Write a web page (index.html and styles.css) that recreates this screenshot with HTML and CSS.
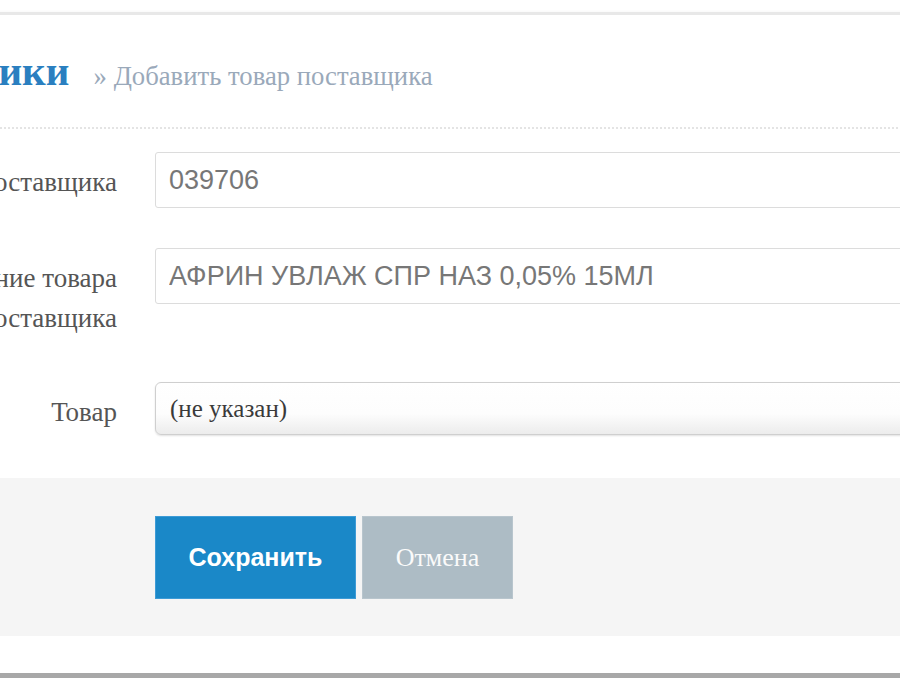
FILE: index.html
```html
<!DOCTYPE html>
<html lang="ru">

<head>
  <meta charset="UTF-8">
  <meta name="viewport" content="width=device-width, initial-scale=1.0">
  <title>Добавить товар поставщика</title>
  <link rel="stylesheet" href="styles.css">
</head>

<body>
  <div class="page">
    <div class="card">
      <div class="page-header">
        <h1>Поставщики <small>» Добавить товар поставщика</small></h1>
      </div>

      <form class="form">
        <div class="form-row">
          <label class="form-label" for="code">Код поставщика</label>
          <input class="form-input" id="code" type="text" value="039706">
        </div>

        <div class="form-row">
          <label class="form-label" for="name">Наименование товара поставщика</label>
          <input class="form-input" id="name" type="text" value="АФРИН УВЛАЖ СПР НАЗ 0,05% 15МЛ">
        </div>

        <div class="form-row form-row-select">
          <label class="form-label" for="product">Товар</label>
          <select class="form-select" id="product">
            <option>(не указан)</option>
          </select>
        </div>

        <div class="form-actions">
          <button type="button" class="save-button">Сохранить</button>
          <button type="button" class="cancel-button">Отмена</button>
        </div>
      </form>
    </div>
  </div>
</body>

</html>
```

FILE: styles.css
```css
html,
body {
  overflow: hidden;
}

body {
  margin: 0;
  padding: 12px 0 0;
  background-color: #fff;
  font-family: "Liberation Serif", serif;
  color: #555;
}

.page {
  margin-left: -183px;
  width: 1400px;
}

.card {
  background-color: #fff;
  border-top: 3px solid #e8e8e8;
  border-bottom: 5px solid #a8a8a8;
  box-shadow: 0 3px 5px rgba(0, 0, 0, 0.2);
  padding-bottom: 37px;
}

.page-header {
  padding: 36px 0 31px 13px;
  border-bottom: 2px dotted #e4e4e4;
}

h1 {
  margin: 0;
  font-size: 41px;
  line-height: 40px;
  font-weight: bold;
  color: #2a7fc0;
}

h1 small {
  margin-left: 14px;
  font-size: 26.7px;
  font-weight: normal;
  color: #9aa9ba;
}

.form {
  margin: 0;
  padding-top: 23px;
}

.form-row {
  display: flex;
  align-items: flex-start;
  gap: 38px;
  margin-bottom: 40px;
}

.form-row-select {
  padding-top: 4px;
  margin-bottom: 43px;
}

.form-label {
  flex: 0 0 300px;
  padding-top: 10px;
  text-align: right;
  font-size: 27px;
  line-height: 40px;
  color: #555;
}

.form-input {
  box-sizing: border-box;
  width: 1000px;
  height: 56px;
  margin: 0;
  padding: 0 13px;
  border: 1px solid #dcdcdc;
  border-radius: 3px;
  background-color: #fff;
  font-family: "Liberation Sans", Arial, sans-serif;
  font-size: 27px;
  color: #777;
}

.form-select {
  box-sizing: border-box;
  width: 1000px;
  height: 53px;
  margin: 0;
  padding: 0 14px;
  border: 1px solid #cfcfcf;
  border-radius: 6px;
  background: linear-gradient(#fff 0%, #fdfdfd 60%, #ececec 100%);
  box-shadow: 0 1px 2px rgba(0, 0, 0, 0.12);
  appearance: none;
  font-family: "Liberation Serif", serif;
  font-size: 25px;
  color: #3a3a3a;
}

.form-actions {
  display: flex;
  gap: 6px;
  padding: 38px 0 37px 338px;
  background-color: #f5f5f5;
}

.save-button {
  width: 201px;
  height: 83px;
  border: 1px solid #3d9bd6;
  background-color: #1a88c8;
  color: #fff;
  font-family: "Liberation Sans", Arial, sans-serif;
  font-size: 25px;
  font-weight: bold;
  cursor: pointer;
}

.cancel-button {
  width: 151px;
  height: 83px;
  border: 1px solid #b8c5cd;
  background-color: #adbcc5;
  color: #fafafa;
  font-family: "Liberation Serif", serif;
  font-size: 26px;
  cursor: pointer;
}
```
